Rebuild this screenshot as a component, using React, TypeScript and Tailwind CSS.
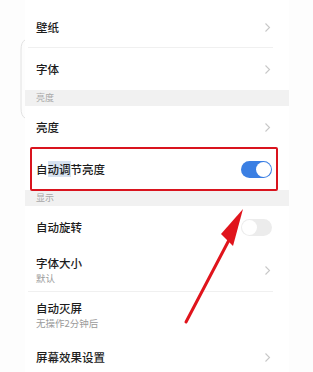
import React from "react";

const font = { fontFamily: '"Noto Sans CJK SC", "Noto Sans", sans-serif' };

function Chevron() {
  return (
    <svg width="7" height="11" viewBox="0 0 7 11" className="shrink-0">
      <path d="M1.5 1.5 L5.5 5.5 L1.5 9.5" fill="none" stroke="#c8c8c8" strokeWidth="1.1" />
    </svg>
  );
}

function Row({ label, sub, h, right, divider }: { label: React.ReactNode; sub?: string; h: string; right?: React.ReactNode; divider?: boolean }) {
  return (
    <div className={`relative flex items-center justify-between pl-[11px] pr-[18px] ${h}`}>
      <div className="flex flex-col">
        <span className="text-[11.5px] leading-[15px] text-[#1c1c1c] font-medium">{label}</span>
        {sub && <span className="text-[9.5px] leading-[13px] text-[#9a9a9a] mt-[1px]">{sub}</span>}
      </div>
      {right ?? <Chevron />}
      {divider && <div className="absolute bottom-0 left-[3px] right-[16px] h-px bg-[#f0f0f0]" />}
    </div>
  );
}

function Header({ label, h }: { label: string; h: string }) {
  return (
    <div className={`flex items-center pl-[11px] bg-[#f1f1f1] ${h}`}>
      <span className="text-[9px] leading-[10px] text-[#a8a8a8]">{label}</span>
    </div>
  );
}

export default function App() {
  return (
    <div className="relative w-[313px] h-[372px] overflow-hidden bg-[#fdfdfd]" style={font}>
      <div className="ml-[25px] w-[264px] pt-[6px] bg-white">
        <Row label="壁纸" h="h-[42px]" divider />
        <Row label="字体" h="h-[42px]" />
        <Header label="亮度" h="h-[16px]" />
        <Row label="亮度" h="h-[42px]" />
        <Row
          label={<>自<span className="bg-[#d6e2f0]">动调</span>节亮度</>}
          h="h-[42px]"
          right={
            <div className="relative w-[31px] h-[17px] rounded-full bg-[#3b7fe3] mr-[-1px]">
              <div className="absolute right-[1px] top-[1px] w-[15px] h-[15px] rounded-full bg-white" />
            </div>
          }
        />
        <Header label="显示" h="h-[16px]" />
        <Row
          label="自动旋转"
          h="h-[42px]"
          right={
            <div className="relative w-[31px] h-[17px] rounded-full bg-[#ececec] mr-[-1px]">
              <div className="absolute left-[1px] top-[1px] w-[15px] h-[15px] rounded-full bg-white" />
            </div>
          }
        />
        <Row label="字体大小" sub="默认" h="h-[44px]" divider />
        <Row label="自动灭屏" sub="无操作2分钟后" h="h-[46px]" right={<span />} />
        <Row label="屏幕效果设置" h="h-[38px]" />
      </div>

      {/* phone edge curve */}
      <svg className="absolute left-0 top-0" width="30" height="130" viewBox="0 0 30 130">
        <path d="M25 40 Q21 42 21 50 L21 108 Q21 116 25 118" fill="none" stroke="#e2e2e2" strokeWidth="1" />
      </svg>

      {/* red highlight box */}
      <div className="absolute left-[30px] top-[147px] w-[248px] h-[44px] border-[2.5px] border-[#d9141e] rounded-[2px]" />

      {/* red arrow */}
      <svg className="absolute left-0 top-0" width="313" height="372" viewBox="0 0 313 372">
        <path d="M186 322 L229 240" stroke="#e0141c" strokeWidth="3" strokeLinecap="round" />
        <path d="M243 209 L221 234 L233 246 Z" fill="#e0141c" />
      </svg>
    </div>
  );
}
